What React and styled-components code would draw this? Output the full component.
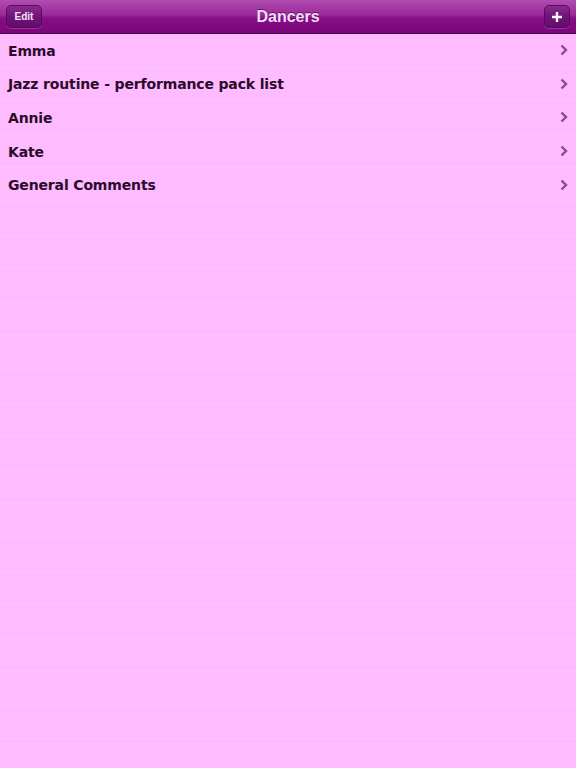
import React from "react";
import styled, { createGlobalStyle } from "styled-components";

const Global = createGlobalStyle`
  html, body { margin: 0; padding: 0; background: #ffbbff; }
  body { font-family: "DejaVu Sans", Verdana, sans-serif; }
`;

const Page = styled.div`
  width: 576px;
  height: 768px;
  overflow: hidden;
  background: #ffbbff;
  display: flex;
  flex-direction: column;
`;

const NavBar = styled.header`
  height: 34px;
  box-sizing: border-box;
  flex: none;
  display: flex;
  align-items: center;
  justify-content: space-between;
  padding: 0 6px;
  position: relative;
  background: linear-gradient(to bottom, #b04cb0 0%, #9a2a9a 45%, #860e86 55%, #7a067a 100%);
  border-bottom: 1px solid #4e004e;
`;

const Title = styled.h1`
  position: absolute;
  left: 0;
  right: 0;
  top: 0;
  bottom: 0;
  margin: 0;
  display: flex;
  align-items: center;
  justify-content: center;
  font-family: "Liberation Sans", Arial, sans-serif;
  font-weight: bold;
  font-size: 16px;
  color: #f6def6;
  text-shadow: 0 -1px 0 rgba(60, 0, 60, 0.6);
  pointer-events: none;
`;

const BarButton = styled.button`
  position: relative;
  z-index: 1;
  height: 23px;
  width: ${(p) => p.$w}px;
  box-sizing: border-box;
  padding: 0;
  border: 1px solid #5a0a5e;
  border-radius: 5px;
  background: linear-gradient(to bottom, #8a2a8e 0%, #70147a 50%, #640c6c 100%);
  box-shadow: 0 1px 0 rgba(255, 180, 255, 0.25);
  color: #f4e4f4;
  font-family: "Liberation Sans", Arial, sans-serif;
  font-weight: bold;
  font-size: 10px;
  display: flex;
  align-items: center;
  justify-content: center;
`;

const List = styled.ul`
  list-style: none;
  margin: 0;
  padding: 0;
  flex: 1;
`;

const Row = styled.li`
  height: 33.6px;
  box-sizing: border-box;
  display: flex;
  align-items: center;
  justify-content: space-between;
  padding: 0 8px 0 8px;
  border-bottom: 1px solid #fcc6fc;
`;

const Label = styled.span`
  font-family: "DejaVu Sans", Verdana, sans-serif;
  font-weight: bold;
  font-size: 14px;
  color: #2a0c2a;
  letter-spacing: -0.15px;
  padding-top: 1px;
`;

const Chevron = () => (
  <svg width="8" height="12" viewBox="0 0 8 12">
    <path d="M1.5 1.5 L6 6 L1.5 10.5" fill="none" stroke="#8c4a8c" strokeWidth="2.4" />
  </svg>
);

const Plus = () => (
  <svg width="12" height="12" viewBox="0 0 12 12">
    <path d="M6 1 V11 M1 6 H11" stroke="#fff4ff" strokeWidth="2.4" />
  </svg>
);

const items = ["Emma", "Jazz routine - performance pack list", "Annie", "Kate", "General Comments"];
const rows = Array.from({ length: 22 }, (_, i) => items[i] || null);

export default function App() {
  return (
    <Page>
      <Global />
      <NavBar>
        <BarButton $w={36}>Edit</BarButton>
        <Title>Dancers</Title>
        <BarButton $w={26}>
          <Plus />
        </BarButton>
      </NavBar>
      <List>
        {rows.map((t, i) => (
          <Row key={i}>
            {t && <Label>{t}</Label>}
            {t && <Chevron />}
          </Row>
        ))}
      </List>
    </Page>
  );
}
